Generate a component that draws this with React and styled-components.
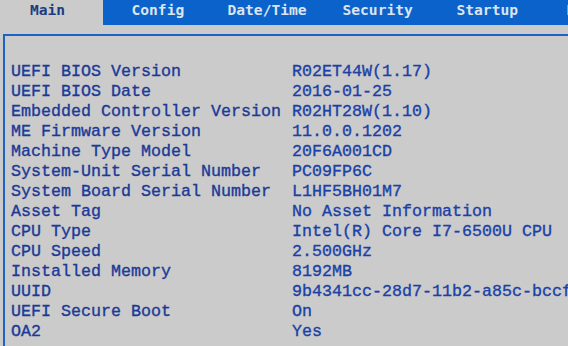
import styled, { createGlobalStyle } from 'styled-components';

const GlobalStyle = createGlobalStyle`
  html, body {
    margin: 0;
    padding: 0;
    background: #cbcbcb;
    overflow: hidden;
  }
`;

const Screen = styled.div`
  width: 568px;
  height: 346px;
  background: #cbcbcb;
  overflow: hidden;
  display: flex;
  flex-direction: column;
`;

const TabBar = styled.ul`
  margin: 0;
  padding: 0;
  list-style: none;
  display: flex;
  height: 25px;
  background: #0b62cb;
  white-space: nowrap;
  font-family: "DejaVu Sans Mono", monospace;
  font-weight: bold;
  font-size: 14.6px;
`;

const Tab = styled.li`
  flex: 0 0 auto;
  width: ${(p) => p.$width}px;
  box-sizing: border-box;
  padding-left: ${(p) => (p.$active ? 30 : 28.5)}px;
  line-height: 20px;
  background: ${(p) => (p.$active ? '#cbcbcb' : 'transparent')};
  color: ${(p) => (p.$active ? '#1c3c82' : '#dbe4ef')};
`;

const Panel = styled.div`
  flex: 1;
  margin: 9px 0 0 3px;
  border-top: 2px solid #1c63c4;
  border-left: 2px solid #1c63c4;
  padding: 26px 0 0 6px;
`;

const InfoGrid = styled.dl`
  margin: 0;
  display: grid;
  grid-template-columns: 281px 1fr;
  grid-auto-rows: 20px;
  font-family: "Liberation Mono", "Courier New", monospace;
  font-size: 16.67px;
  line-height: 20px;
  white-space: nowrap;
  -webkit-text-stroke: 0.35px currentColor;
`;

const Label = styled.dt`
  margin: 0;
  color: #1a3a98;
`;

const Value = styled.dd`
  margin: 0;
  color: #1b41a6;
  overflow: hidden;
`;

const tabs = [
  { name: 'Main', width: 103, active: true },
  { name: 'Config', width: 96 },
  { name: 'Date/Time', width: 115 },
  { name: 'Security', width: 114 },
  { name: 'Startup', width: 110 },
  { name: 'Restart', width: 120 },
];

const rows = [
  ['UEFI BIOS Version', 'R02ET44W(1.17)'],
  ['UEFI BIOS Date', '2016-01-25'],
  ['Embedded Controller Version', 'R02HT28W(1.10)'],
  ['ME Firmware Version', '11.0.0.1202'],
  ['Machine Type Model', '20F6A001CD'],
  ['System-Unit Serial Number', 'PC09FP6C'],
  ['System Board Serial Number', 'L1HF5BH01M7'],
  ['Asset Tag', 'No Asset Information'],
  ['CPU Type', 'Intel(R) Core I7-6500U CPU'],
  ['CPU Speed', '2.500GHz'],
  ['Installed Memory', '8192MB'],
  ['UUID', '9b4341cc-28d7-11b2-a85c-bccf'],
  ['UEFI Secure Boot', 'On'],
  ['OA2', 'Yes'],
];

export default function App() {
  return (
    <Screen>
      <GlobalStyle />
      <TabBar>
        {tabs.map((t) => (
          <Tab key={t.name} $width={t.width} $active={t.active}>
            {t.name}
          </Tab>
        ))}
      </TabBar>
      <Panel>
        <InfoGrid>
          {rows.map(([label, value]) => (
            <>
              <Label key={label}>{label}</Label>
              <Value key={label + '-v'}>{value}</Value>
            </>
          ))}
        </InfoGrid>
      </Panel>
    </Screen>
  );
}
